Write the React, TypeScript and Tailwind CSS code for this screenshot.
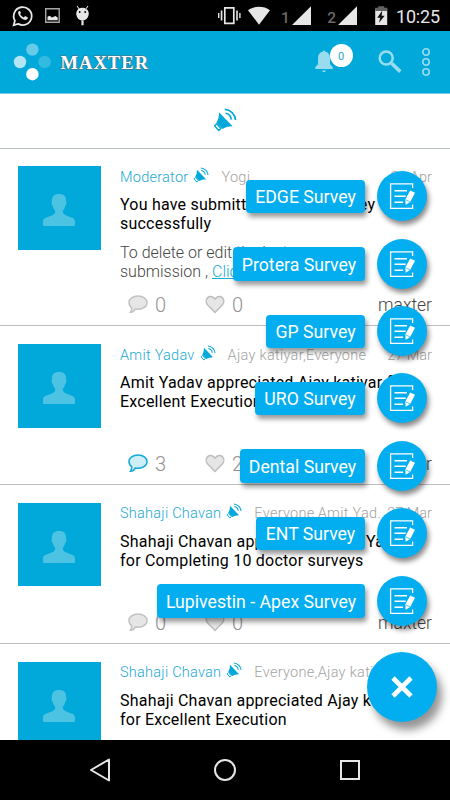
import { clsx } from 'clsx'

type Post = {
  author: string
  audience: string
  date: string
  title: string[]
  comments?: number
  likes?: number
  height: string
  note?: boolean
}

const posts: Post[] = [
  {
    author: 'Moderator',
    audience: 'Yogi',
    date: '21 Apr',
    title: ['You have submitted Protera Survey', 'successfully'],
    comments: 0,
    likes: 0,
    height: 'h-[177px] pt-[17px]',
    note: true,
  },
  {
    author: 'Amit Yadav',
    audience: 'Ajay katiyar,Everyone',
    date: '27 Mar',
    title: ['Amit Yadav appreciated Ajay katiyar for', 'Excellent Execution'],
    comments: 3,
    likes: 2,
    height: 'h-[159px] pt-[18px]',
  },
  {
    author: 'Shahaji Chavan',
    audience: 'Everyone,Amit Yad..',
    date: '27 Mar',
    title: ['Shahaji Chavan appreciated Amit Yadav', 'for Completing 10 doctor surveys'],
    comments: 0,
    likes: 0,
    height: 'h-[159px] pt-[17.5px]',
  },
  {
    author: 'Shahaji Chavan',
    audience: 'Everyone,Ajay kati..',
    date: '27 Mar',
    title: ['Shahaji Chavan appreciated Ajay katiyar', 'for Excellent Execution'],
    height: 'h-[159px] pt-[17.5px]',
  },
]

const surveys = [
  { label: 'EDGE Survey', width: 'w-[119px]' },
  { label: 'Protera Survey', width: 'w-[132px]' },
  { label: 'GP Survey', width: 'w-[99px]' },
  { label: 'URO Survey', width: 'w-[110px]' },
  { label: 'Dental Survey', width: 'w-[125px]' },
  { label: 'ENT Survey', width: 'w-[109px]' },
  { label: 'Lupivestin - Apex Survey', width: 'w-[208px]' },
]

function HornIcon({ className }: { className?: string }) {
  return (
    <svg viewBox="0 0 24 24" className={clsx('shrink-0', className)} fill="none">
      <path d="M6 4.2 19.6 18.2 Q13 18.4 9.4 21 L3.4 14.4 Q6.2 10.500 6 4.200Z" fill="#00a9d9" />
      <path d="M3.800 15.800 7.900 20.500 5.800 22.500 1.600 17.700Z" stroke="#00a9d9" strokeWidth="1.4" strokeLinejoin="round" />
      <path d="M12.500 5.300C15.600 5.800 17.900 8.400 18.300 11.600M11.800 1.400C17.500 1.700 22 6.200 22.600 12" stroke="#00a9d9" strokeWidth="1.6" />
    </svg>
  )
}

function SurveyIcon() {
  return (
    <svg viewBox="0 0 26 28" className="h-[28px] w-[26px]" fill="none" stroke="#fff">
      <path d="M23.6 6V1.8H1.6v24.6h22v-3.8" strokeWidth="1.3" />
      <path d="M5.5 8.8h12.5M5.5 14.2h11.2M5.5 20.2h8.6" strokeWidth="1.5" />
      <path d="M21.2 8.6 26 10.8 21.2 20 16.6 22.8 16.3 17.6Z" fill="#fff" stroke="none" />
      <path d="m16.4 17.6 4.6 2.3" stroke="#03aef0" strokeWidth=".7" />
    </svg>
  )
}

function StatusBar() {
  return (
    <div className="flex h-[31px] items-center bg-black text-[#e6e6e6]">
      <svg viewBox="0 0 450 31" className="h-[31px] w-[450px]" fill="#e6e6e6">
        <path d="M13.7 25.2l1.2-4.6a9 9 0 1 1 3.3 3.3z" fill="none" stroke="#e6e6e6" strokeWidth="1.8" />
        <path d="M19.5 10.7c-1.6.7-1.8 2.4-.7 4.2 1.6 2.9 4 4.8 6.6 5.1 1.2 0 2.5-.9 2.5-2.4l-2.8-1.5-1.3 1.4c-1.8-.7-3-2-3.7-3.4l1-1.3z" />
        <path d="M45.7 8.8h13.5v13.5H45.7z" fill="none" stroke="#a6a6a6" strokeWidth="1.4" />
        <path d="M47.5 20.3v-3.5l2.2-1.1 2.2 1.7 3.5-1.3 2.3 1.3v2.9z" />
        <path d="M76.2 13a6.4 6.4 0 0 1 12.6 0c0 10-12.6 10-12.6 0zM77.4 5.8l2.3 3.1-.8.6-2.3-3.2zM87.6 5.8l-2.3 3.1.8.6 2.3-3.2zM81.4 20.8h2.2v4.4h-2.2z" />
        <circle cx="79.7" cy="12" r=".9" fill="#000" />
        <circle cx="85.2" cy="12" r=".9" fill="#000" />
        <path d="M224.8 7.9h9v15.4h-9z" fill="none" stroke="#e6e6e6" strokeWidth="1.7" />
        <path d="M220.7 10.5h1.7v10h-1.7zM218 13h1.4v5H218zM236.2 10.5h1.6v10h-1.6zM239.2 13h1.4v5h-1.4z" />
        <path d="M248 10.2c6-4.6 15.9-4.6 22 0L259 24.7z" />
        <path d="M311 6.3V25h-19zM357 6.3V25h-19z" />
        <path d="M375.2 8.8h12V25h-12z" />
        <path d="M375.2 9V7.8h3V6.2h6v1.6h3V11h-12z" fill="#626262" />
        <path d="m382.2 10.7-5 7.1h3l-1.2 5 5.7-7h-3z" fill="#111" />
        <g fontFamily="Roboto, sans-serif">
          <text x="281" y="22.8" fontSize="15.5" fontWeight="500" fill="#686868">1</text>
          <text x="327.3" y="22.8" fontSize="15.5" fontWeight="500" fill="#686868">2</text>
          <text x="396" y="22.8" fontSize="18" fontWeight="400" textLength="44">10:25</text>
        </g>
      </svg>
    </div>
  )
}

function Header() {
  return (
    <header className="flex h-[63px] items-center border-b border-[#6dcbe6] bg-[#00a9d9] pl-[13px] pr-[19px]">
      <svg viewBox="0 0 38 38" className="h-[38px] w-[38px]" fill="#fff">
        <circle cx="19.4" cy="6.6" r="6.2" opacity=".4" />
        <circle cx="7" cy="19" r="6.2" opacity=".7" />
        <circle cx="31.6" cy="19" r="6.2" opacity=".2" />
        <circle cx="19.4" cy="31.2" r="6.2" />
      </svg>
      <svg viewBox="0 0 92 24" className="ml-[7px] h-[24px] w-[92px] overflow-visible">
        <text
          x="2.5"
          y="18.6"
          textLength="87.5"
          fontFamily="'Liberation Serif', serif"
          fontSize="18.5"
          fontWeight="700"
          fill="#fff"
          stroke="#5c6b72"
          strokeWidth="1"
          paintOrder="stroke"
        >
          MAXTER
        </text>
      </svg>
      <div className="relative ml-auto mr-[45px] h-[22px] w-[18px]">
        <svg viewBox="0 0 18 22" className="-mt-[1px] h-[22px] w-[18px]" fill="#99dcef">
          <path d="M8 1.5a1 1 0 0 1 2 0c3.2.7 5 3 5 6.5v6.3l2.7 2.8V19H.3v-1.9L3 14.3V8c0-3.5 1.8-5.8 5-6.5zM7.3 20.4h3.4a1.7 1.7 0 0 1-3.4 0z" />
        </svg>
        <span className="absolute -top-[7.5px] left-[14.5px] flex size-[23px] items-center justify-center rounded-full bg-white pt-[2px] text-[11px] leading-none text-[#2aa5cc]">
          0
        </span>
      </div>
      <svg viewBox="0 0 24 24" className="h-[24px] w-[24px]" fill="none" stroke="#99dcef">
        <circle cx="8.2" cy="8" r="6.5" strokeWidth="2.5" />
        <path d="m13.5 13.2 8.8 8.4" strokeWidth="3.6" />
      </svg>
      <svg viewBox="0 0 10 30" className="ml-[19px] h-[30px] w-[10px]" fill="none" stroke="#99dcef" strokeWidth="1.6">
        <circle cx="5" cy="5" r="3.2" />
        <circle cx="5" cy="15" r="3.2" />
        <circle cx="5" cy="25" r="3.2" />
      </svg>
    </header>
  )
}

function PostCard({ post }: { post: Post }) {
  const active = !!post.comments
  return (
    <article className={clsx('flex shrink-0 border-b border-[#c0c0c0] pl-[17.5px] pr-[18px]', post.height)}>
      <div className="flex size-[83.5px] shrink-0 items-center justify-center bg-[#00a9d9]">
        <svg viewBox="0 0 32 32" className="mt-[5px] size-[32px]" fill="#4dc3e3">
          <path d="M16 0c5 0 7.2 2.5 7 7 .8 1.500.5 4.200-.8 5-.6 2.800-1.700 4-2.500 5 0 4 4 4.600 7.300 6 3.500 1.200 5 2 5 5v2.500c0 1-.4 1.500-1.500 1.500h-29C.4 32 0 31.500 0 30.500V28c0-3 1.500-3.800 5-5 3.300-1.400 7.300-2 7.300-6-.8-1-1.900-2.200-2.500-5-1.300-.8-1.600-3.500-.8-5-.2-4.500 2-7 7-7z" />
        </svg>
      </div>
      <div className="ml-[19px] flex min-w-0 flex-1 flex-col whitespace-nowrap">
        <div className="mt-[1px] flex h-[21px] items-center text-[14.5px] font-light text-[#a3a3a3]">
          <span className="tracking-[0.25px] text-[#1ba9d5]">{post.author}</span>
          <HornIcon className="-mt-[6px] ml-[5px] size-[16px]" />
          <span className="ml-[12px] tracking-[0.3px]">{post.audience}</span>
          <span className="ml-auto">{post.date}</span>
        </div>
        <div className="mt-[7px] text-[16px] leading-[19px] tracking-[0.22px] text-black">
          {post.title.map((line) => (
            <p key={line}>{line}</p>
          ))}
        </div>
        {post.note && (
          <div className="mt-[10px] text-[16px] font-light leading-[19px] text-[#444]">
            <p>To delete or edit the last</p>
            <p>
              submission , <span className="text-[#1ba9d5] underline">Click here</span>
            </p>
          </div>
        )}
        {post.comments !== undefined && (
          <div className="mb-[8px] mt-auto flex h-[24px] items-center pl-[8px] text-[20px] font-light text-[#939393]">
            <svg
              viewBox="0 0 20 19"
              className="-mt-[2px] h-[19px] w-[20px]"
              fill={active ? '#cceef7' : '#e6e6e6'}
              stroke={active ? '#12a9d6' : '#c2c2c2'}
              strokeWidth="1.5"
            >
              <path d="M10 1C5 1 1 3.6 1 7.400c0 2.400 1.200 4.200 2.800 5.400 0 1.600-.4 3.300-1.300 4.500 2 0 3.700-1.300 4.700-3.200 6.300.8 11.800-2 11.800-6.700C19 3.600 15 1 10 1z" />
            </svg>
            <span className="ml-[7px] w-[50px]">{post.comments}</span>
            <svg viewBox="0 0 20 19" className="-mt-[2px] h-[19px] w-[20px]" fill="#e6e6e6" stroke="#bdbdbd" strokeWidth="1.5">
              <path d="M10 17.5 2.5 9.700C-1.500 5 4.500-2.500 10 4c5.500-6.500 11.500 1 7.500 5.700z" />
            </svg>
            <span className="ml-[7px]">{post.likes}</span>
            <span className="ml-auto text-[17.5px] text-[#444]">maxter</span>
          </div>
        )}
      </div>
    </article>
  )
}

function SurveyMenu() {
  return (
    <div className="absolute right-[13px] top-[171.3px] flex flex-col items-end">
      {surveys.map(({ label, width }) => (
        <button key={label} className="mr-[10px] flex h-[67.4px] items-start gap-[12px]">
          <span
            className={clsx(
              'mt-[8.5px] flex h-[33.5px] items-center justify-center whitespace-nowrap rounded-[4px] bg-[#03aef0] pt-[2px] text-[17.7px] text-white shadow-[2px_4px_5px_rgba(0,0,0,0.4)]',
              width,
            )}
          >
            {label}
          </span>
          <span className="flex size-[50px] items-center justify-center rounded-full bg-[#03aef0] shadow-[2px_4px_5px_rgba(0,0,0,0.45)]">
            <SurveyIcon />
          </span>
        </button>
      ))}
      <button className="mt-[9px] flex size-[70px] items-center justify-center rounded-full bg-[#03aef0] shadow-[5px_8px_9px_rgba(0,0,0,0.42)]">
        <svg viewBox="0 0 22 22" className="size-[22px]" stroke="#fff" strokeWidth="4.6">
          <path d="m2 2 18 18M20 2 2 20" />
        </svg>
      </button>
    </div>
  )
}

function NavBar() {
  return (
    <nav className="flex h-[60px] items-center justify-center gap-[101px] bg-black">
      <svg viewBox="0 0 24 26" className="h-[26px] w-[24px]" fill="none" stroke="#e6e6e6" strokeWidth="2">
        <path d="M21 2.5v21L3 13z" strokeLinejoin="round" />
      </svg>
      <svg viewBox="0 0 24 24" className="size-[24px]" fill="none" stroke="#e6e6e6" strokeWidth="2">
        <circle cx="12" cy="12" r="10" />
      </svg>
      <svg viewBox="0 0 24 24" className="size-[24px]" fill="none" stroke="#e6e6e6" strokeWidth="2">
        <path d="M3 3h18v18H3z" />
      </svg>
    </nav>
  )
}

export default function App() {
  return (
    <div className="relative flex h-[800px] w-[450px] flex-col overflow-hidden bg-white font-[Roboto,sans-serif]">
      <StatusBar />
      <Header />
      <div className="flex h-[55px] items-center justify-center border-b border-[#bcc4c6]">
        <HornIcon className="-mt-[3px] size-[24px]" />
      </div>
      <main className="flex min-h-0 flex-1 flex-col overflow-hidden">
        {posts.map((post, i) => (
          <PostCard key={i} post={post} />
        ))}
      </main>
      <NavBar />
      <SurveyMenu />
    </div>
  )
}
